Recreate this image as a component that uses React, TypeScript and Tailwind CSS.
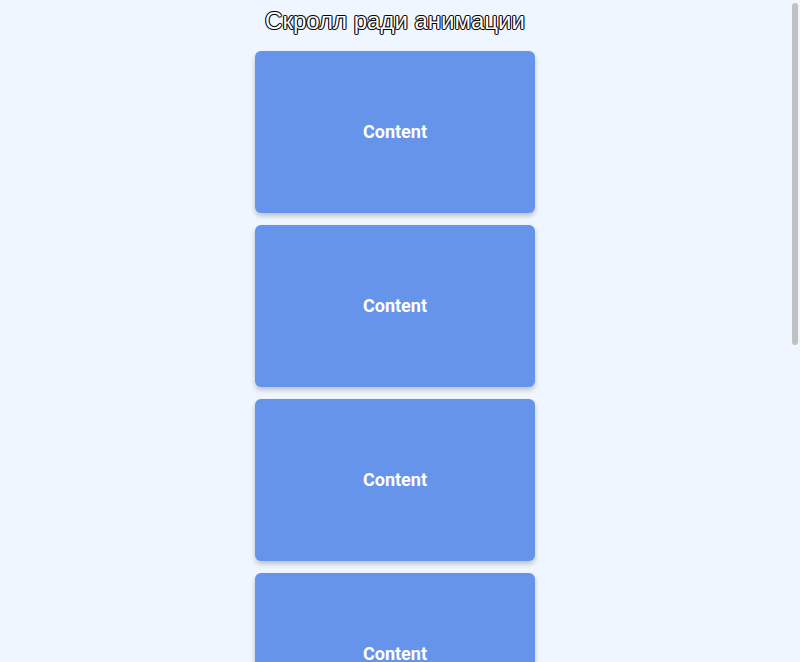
import React from "react";

export default function App() {
  const cards = [0, 1, 2, 3, 4, 5];
  return (
    <div className="flex h-[662px] w-[800px] overflow-hidden bg-[#eff6ff]">
      <div className="w-[790px] overflow-hidden">
        <h1 className="pt-[7px] text-center text-[24px] leading-[28px] text-white [font-family:'Liberation_Sans',Arial,sans-serif] [text-shadow:1px_0_0_#000,-1px_0_0_#000,0_1px_0_#000,0_-1px_0_#000,1px_1px_0_rgba(0,0,0,0.4),-1px_-1px_0_rgba(0,0,0,0.4),1px_-1px_0_rgba(0,0,0,0.4),-1px_1px_0_rgba(0,0,0,0.4)]">
          Скролл ради анимации
        </h1>
        <div className="mt-[16px] flex flex-col items-center gap-[12px]">
          {cards.map((i) => (
            <div
              key={i}
              className="flex h-[162px] w-[280px] shrink-0 items-center justify-center rounded-[6px] bg-[#6694ea] pb-[2px] shadow-[0_3px_5px_rgba(0,0,0,0.22)]"
            >
              <span className="text-[18px] font-bold text-white [font-family:Roboto,'Liberation_Sans',sans-serif]">
                Content
              </span>
            </div>
          ))}
        </div>
      </div>
      <div className="flex w-[10px] flex-col pt-[3px]">
        <div className="ml-[2px] h-[342px] w-[6px] rounded-full bg-[#c1c1c1]" />
      </div>
    </div>
  );
}
